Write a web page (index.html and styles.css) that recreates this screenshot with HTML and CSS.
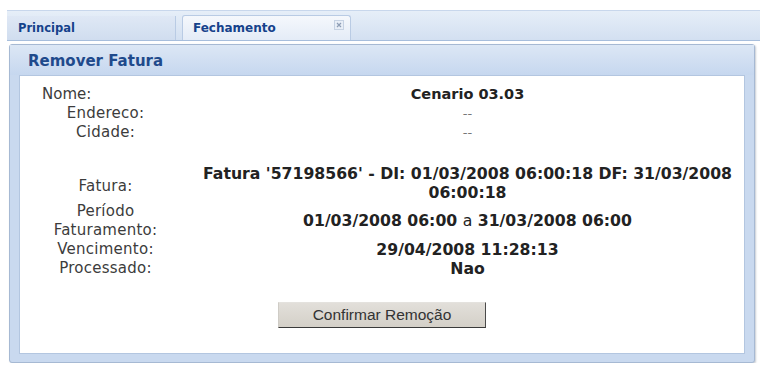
FILE: index.html
```html
<!DOCTYPE html>
<html>
    <head>
        <title>Remover Fatura</title>
        <meta charset="utf-8">
        <link rel="stylesheet" href="styles.css">
    </head>
    <body>
        <div class="tabstrip">
            <div class="tab">Principal</div>
            <div class="tab active">Fechamento
                <span class="close">
                    <svg width="10" height="10" viewBox="0 0 10 10">
                        <rect x="0.5" y="0.5" width="9" height="9" fill="#e8eef7" stroke="#c6d2e3"/>
                        <path d="M3 3 L7 7 M7 3 L3 7" stroke="#8d9db5" stroke-width="1.2"/>
                    </svg>
                </span>
            </div>
        </div>
        <div class="panel">
            <div class="panel-header">Remover Fatura</div>
            <div class="panel-body">
                <table class="dados">
                    <tr>
                        <td class="label nome">Nome:</td>
                        <td class="valor cenario">Cenario 03.03</td>
                    </tr>
                    <tr>
                        <td class="label">Endereco:</td>
                        <td class="valor vazio">--</td>
                    </tr>
                    <tr>
                        <td class="label">Cidade:</td>
                        <td class="valor vazio">--</td>
                    </tr>
                    <tr class="espaco">
                        <td></td>
                        <td></td>
                    </tr>
                    <tr>
                        <td class="label fatura">Fatura:</td>
                        <td class="valor">Fatura '57198566' - DI: 01/03/2008 06:00:18 DF: 31/03/2008<br>06:00:18</td>
                    </tr>
                    <tr>
                        <td class="label">Período<br>Faturamento:</td>
                        <td class="valor">01/03/2008 06:00 <span class="normal">a</span> 31/03/2008 06:00</td>
                    </tr>
                    <tr>
                        <td class="label">Vencimento:</td>
                        <td class="valor">29/04/2008 11:28:13</td>
                    </tr>
                    <tr>
                        <td class="label">Processado:</td>
                        <td class="valor">Nao</td>
                    </tr>
                </table>
                <button class="button">Confirmar Remoção</button>
            </div>
        </div>
    </body>
</html>
```
FILE: styles.css
```css
body{
    margin: 0;
    background-color: white;
    font-family: "DejaVu Sans", Verdana, sans-serif;
}
.tabstrip{
    margin: 10px 6px 0 7px;
    height: 31px;
    padding-top: 6px;
    box-sizing: border-box;
    display: flex;
    align-items: flex-end;
    border-top: 1px solid #c8d7ec;
    border-bottom: 1px solid #a7bedc;
    background: linear-gradient(#e6eef8, #d3e0f1);
}
.tab{
    width: 157px;
    height: 24px;
    padding-left: 11px;
    line-height: 24px;
    font-size: 11.5px;
    font-weight: bold;
    color: #15428b;
    border-right: 1px solid #b9cbe4;
    background: linear-gradient(#dfe8f5, #d0ddef);
}
.tab.active{
    position: relative;
    width: 157px;
    margin-left: 6px;
    padding-left: 10px;
    font-size: 12px;
    border: 1px solid #b9cbe4;
    border-bottom: none;
    border-radius: 3px 3px 0 0;
    background: linear-gradient(#f5f8fc, #e4ecf7);
}
.close{
    position: absolute;
    right: 6px;
    top: 4px;
    line-height: 0;
}
.panel{
    margin: 3px 11px 0 9px;
    border: 1px solid #a6b9d3;
    border-radius: 3px;
    background-color: #c9d9ef;
    box-shadow: 1px 1px 2px #c8ccd2;
}
.panel-header{
    height: 30px;
    padding-left: 18px;
    line-height: 32px;
    font-size: 15px;
    font-weight: bold;
    color: #1f4a8c;
    background: linear-gradient(#dce7f5, #c6d7ef);
}
.panel-body{
    margin: 0 9px 8px 9px;
    padding: 9px 0 25px 0;
    background-color: white;
    border: 1px solid #b3c6e0;
}
.dados{
    width: 100%;
    table-layout: fixed;
    border-collapse: collapse;
    line-height: 19px;
}
.dados td{
    padding: 0;
}
.label{
    width: 171px;
    box-sizing: border-box;
    text-align: center;
    font-size: 15px;
    letter-spacing: 0.25px;
    color: #3c3c3c;
}
.label.nome{
    text-align: left;
    padding-left: 22px;
    letter-spacing: 0;
}
.label.fatura{
    padding-top: 8px;
}
.valor{
    padding-right: 13px;
    text-align: center;
    font-size: 15.7px;
    font-weight: bold;
    color: #222;
}
.valor.cenario{
    font-size: 14.5px;
}
.valor.vazio{
    font-weight: normal;
    font-size: 13px;
    color: #777;
}
.normal{
    font-weight: normal;
}
.espaco td{
    height: 21.5px;
}
.button{
    display: block;
    width: 208px;
    height: 26px;
    margin: 24.5px auto 0 auto;
    font-family: "Liberation Sans", Arial, sans-serif;
    font-size: 15.5px;
    color: #333;
    background: linear-gradient(#e2dfda, #d4d0c8);
    border: 1px solid;
    border-color: #e4e2de #4a4a4a #3a3a3a #cfccc6;
}
```
